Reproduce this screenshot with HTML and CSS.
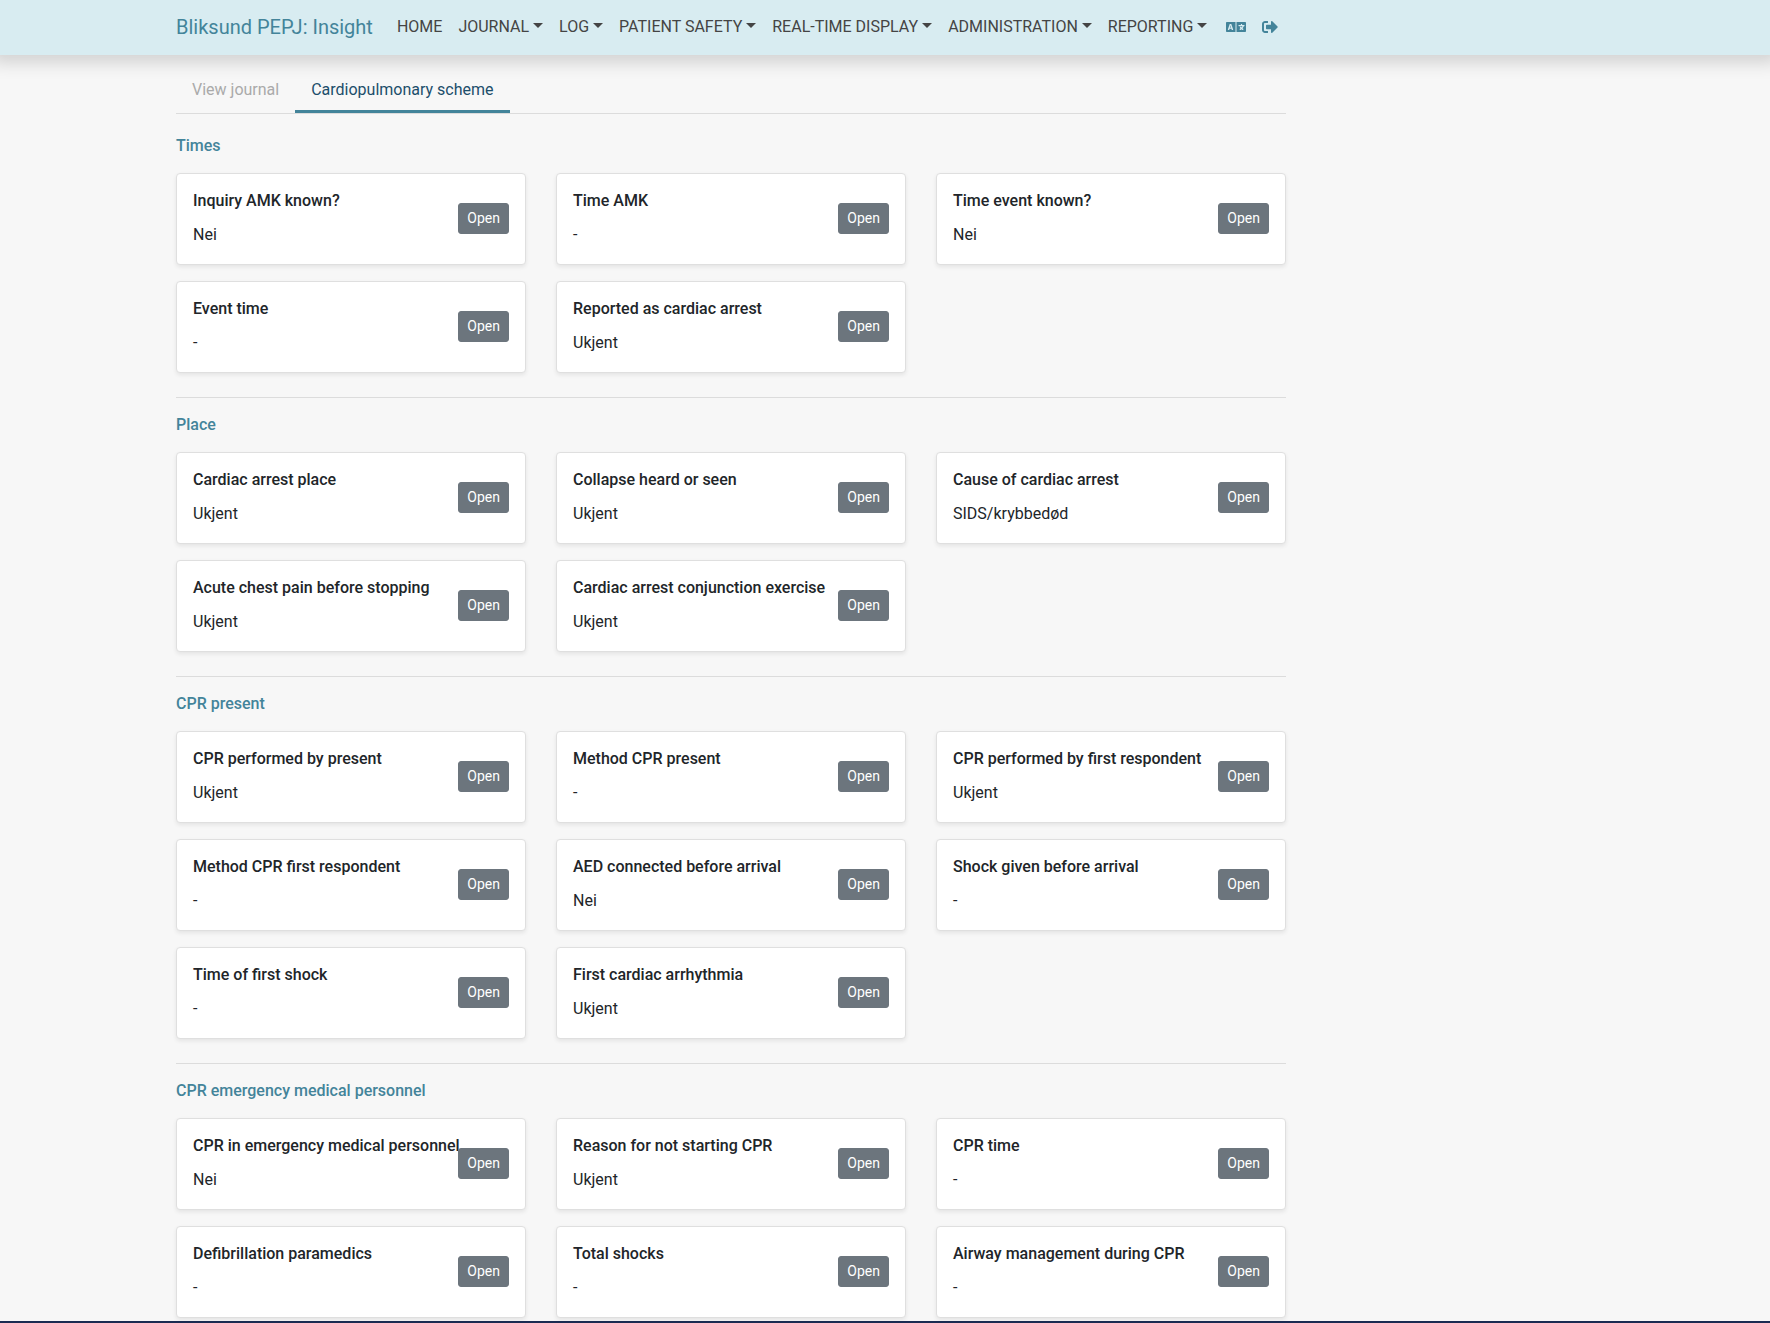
FILE: index.html
```html
<!DOCTYPE html>
<html lang="en">
<head>
<meta charset="utf-8">
<meta name="viewport" content="width=device-width, initial-scale=1">
<title>Bliksund PEPJ: Insight</title>
<link rel="stylesheet" href="styles.css">
</head>
<body>
<header class="topbar">
  <a class="brand" href="#">Bliksund PEPJ: Insight</a>
  <nav class="menu" aria-label="Main">
    <a class="menu-link" href="#">HOME</a>
    <a class="menu-link has-caret" href="#">JOURNAL</a>
    <a class="menu-link has-caret" href="#">LOG</a>
    <a class="menu-link has-caret" href="#">PATIENT SAFETY</a>
    <a class="menu-link has-caret" href="#">REAL-TIME DISPLAY</a>
    <a class="menu-link has-caret" href="#">ADMINISTRATION</a>
    <a class="menu-link has-caret" href="#">REPORTING</a>
  </nav>
  <div class="tools">
    <a class="tool" href="#" aria-label="Language"><svg width="20" height="16" viewBox="0 0 640 512" fill="currentColor"><path d="M152.1 236.2c-3.5-12.1-7.8-33.2-7.8-33.2h-.5s-4.3 21.1-7.8 33.2l-11.1 37.5H163zM616 96H336v320h280c13.3 0 24-10.7 24-24V120c0-13.3-10.7-24-24-24zm-24 120c0 6.6-5.4 12-12 12h-11.4c-6.9 23.6-21.7 47.4-42.7 69.9 8.4 6.4 17.1 12.5 26.1 18 5.5 3.4 7.3 10.5 4.1 16.2l-7.9 13.9c-3.4 5.9-10.9 7.8-16.7 4.3-12.6-7.8-24.5-16.1-35.4-24.9-10.9 8.7-22.7 17.1-35.4 24.9-5.8 3.5-13.3 1.6-16.7-4.3l-7.9-13.9c-3.2-5.6-1.4-12.8 4.2-16.2 9.3-5.7 18-11.7 26.1-18-7.9-8.4-14.9-17-21-25.7-4-5.7-2.2-13.6 3.7-17.1l6.5-3.9 7.3-4.3c5.4-3.2 12.4-1.7 16 3.4 5 7 10.8 14 17.4 20.9 13.5-14.2 23.8-28.9 30-43.2H412c-6.6 0-12-5.4-12-12v-16c0-6.6 5.4-12 12-12h64v-16c0-6.6 5.4-12 12-12h16c6.6 0 12 5.4 12 12v16h64c6.6 0 12 5.4 12 12zM0 120v272c0 13.3 10.7 24 24 24h280V96H24c-13.3 0-24 10.7-24 24zm58.9 216.1L116.4 167c1.7-4.9 6.2-8.1 11.4-8.1h32.5c5.1 0 9.7 3.3 11.4 8.1l57.5 169.1c2.6 7.8-3.1 15.9-11.4 15.9h-22.9a12 12 0 0 1-11.5-8.6l-9.4-31.9h-60.2l-9.1 31.8c-1.5 5.1-6.2 8.7-11.5 8.7H70.3c-8.2 0-14-8.1-11.4-15.9z"/></svg></a>
    <a class="tool" href="#" aria-label="Log out"><svg width="16" height="16" viewBox="0 0 512 512" fill="currentColor"><path d="M497 273L329 441c-15 15-41 4.500-41-17v-96H152c-13.300 0-24-10.700-24-24v-96c0-13.300 10.700-24 24-24h136V88c0-21.400 25.900-32 41-17l168 168c9.300 9.400 9.300 24.600 0 34zM192 436v-40c0-6.600-5.400-12-12-12H96c-17.700 0-32-14.300-32-32V160c0-17.700 14.300-32 32-32h84c6.600 0 12-5.400 12-12V76c0-6.600-5.400-12-12-12H96c-53 0-96 43-96 96v192c0 53 43 96 96 96h84c6.600 0 12-5.400 12-12z"/></svg></a>
  </div>
</header>

<main class="content">
  <nav class="tabs" aria-label="Journal views">
    <a class="tab" href="#">View journal</a>
    <a class="tab tab-active" href="#" aria-current="page">Cardiopulmonary scheme</a>
  </nav>

  <section class="group">
    <h2 class="group-title">Times</h2>
    <div class="cards">
      <article class="card"><div class="card-text"><h3 class="card-title">Inquiry AMK known?</h3><p class="card-value">Nei</p></div><button class="open" type="button">Open</button></article>
      <article class="card"><div class="card-text"><h3 class="card-title">Time AMK</h3><p class="card-value">-</p></div><button class="open" type="button">Open</button></article>
      <article class="card"><div class="card-text"><h3 class="card-title">Time event known?</h3><p class="card-value">Nei</p></div><button class="open" type="button">Open</button></article>
      <article class="card"><div class="card-text"><h3 class="card-title">Event time</h3><p class="card-value">-</p></div><button class="open" type="button">Open</button></article>
      <article class="card"><div class="card-text"><h3 class="card-title">Reported as cardiac arrest</h3><p class="card-value">Ukjent</p></div><button class="open" type="button">Open</button></article>
    </div>
  </section>

  <section class="group">
    <h2 class="group-title">Place</h2>
    <div class="cards">
      <article class="card"><div class="card-text"><h3 class="card-title">Cardiac arrest place</h3><p class="card-value">Ukjent</p></div><button class="open" type="button">Open</button></article>
      <article class="card"><div class="card-text"><h3 class="card-title">Collapse heard or seen</h3><p class="card-value">Ukjent</p></div><button class="open" type="button">Open</button></article>
      <article class="card"><div class="card-text"><h3 class="card-title">Cause of cardiac arrest</h3><p class="card-value">SIDS/krybbedød</p></div><button class="open" type="button">Open</button></article>
      <article class="card"><div class="card-text"><h3 class="card-title">Acute chest pain before stopping</h3><p class="card-value">Ukjent</p></div><button class="open" type="button">Open</button></article>
      <article class="card"><div class="card-text"><h3 class="card-title">Cardiac arrest conjunction exercise</h3><p class="card-value">Ukjent</p></div><button class="open" type="button">Open</button></article>
    </div>
  </section>

  <section class="group">
    <h2 class="group-title">CPR present</h2>
    <div class="cards">
      <article class="card"><div class="card-text"><h3 class="card-title">CPR performed by present</h3><p class="card-value">Ukjent</p></div><button class="open" type="button">Open</button></article>
      <article class="card"><div class="card-text"><h3 class="card-title">Method CPR present</h3><p class="card-value">-</p></div><button class="open" type="button">Open</button></article>
      <article class="card"><div class="card-text"><h3 class="card-title">CPR performed by first respondent</h3><p class="card-value">Ukjent</p></div><button class="open" type="button">Open</button></article>
      <article class="card"><div class="card-text"><h3 class="card-title">Method CPR first respondent</h3><p class="card-value">-</p></div><button class="open" type="button">Open</button></article>
      <article class="card"><div class="card-text"><h3 class="card-title">AED connected before arrival</h3><p class="card-value">Nei</p></div><button class="open" type="button">Open</button></article>
      <article class="card"><div class="card-text"><h3 class="card-title">Shock given before arrival</h3><p class="card-value">-</p></div><button class="open" type="button">Open</button></article>
      <article class="card"><div class="card-text"><h3 class="card-title">Time of first shock</h3><p class="card-value">-</p></div><button class="open" type="button">Open</button></article>
      <article class="card"><div class="card-text"><h3 class="card-title">First cardiac arrhythmia</h3><p class="card-value">Ukjent</p></div><button class="open" type="button">Open</button></article>
    </div>
  </section>

  <section class="group">
    <h2 class="group-title">CPR emergency medical personnel</h2>
    <div class="cards">
      <article class="card"><div class="card-text"><h3 class="card-title">CPR in emergency medical personnel</h3><p class="card-value">Nei</p></div><button class="open" type="button">Open</button></article>
      <article class="card"><div class="card-text"><h3 class="card-title">Reason for not starting CPR</h3><p class="card-value">Ukjent</p></div><button class="open" type="button">Open</button></article>
      <article class="card"><div class="card-text"><h3 class="card-title">CPR time</h3><p class="card-value">-</p></div><button class="open" type="button">Open</button></article>
      <article class="card"><div class="card-text"><h3 class="card-title">Defibrillation paramedics</h3><p class="card-value">-</p></div><button class="open" type="button">Open</button></article>
      <article class="card"><div class="card-text"><h3 class="card-title">Total shocks</h3><p class="card-value">-</p></div><button class="open" type="button">Open</button></article>
      <article class="card"><div class="card-text"><h3 class="card-title">Airway management during CPR</h3><p class="card-value">-</p></div><button class="open" type="button">Open</button></article>
    </div>
  </section>
</main>
<footer class="bottom-line"></footer>
</body>
</html>
```
FILE: styles.css
```css
* { box-sizing: border-box; }

body {
  display: flex;
  flex-direction: column;
  min-height: 100vh;
  margin: 0;
  background: #f7f7f7;
  color: #212529;
  font: 400 16px/24px Roboto, "Liberation Sans", sans-serif;
}

a { color: inherit; text-decoration: none; }
h2, h3, p { margin: 0; }

/* Top bar */
.topbar {
  display: flex;
  align-items: center;
  min-height: 55px;
  padding: 0 16px 2px 176px;
  background: #d8ecf1;
  box-shadow: 0 0 16px 8px rgba(0, 0, 0, 0.15);
}

.brand {
  margin-right: 16px;
  color: #43849a;
  font-size: 20px;
  line-height: 30px;
  white-space: nowrap;
}

.menu, .tools { display: flex; align-items: center; }
.menu-link { padding: 8px; color: #444; white-space: nowrap; }

.has-caret::after {
  content: "";
  display: inline-block;
  margin-left: 4px;
  vertical-align: 4px;
  border: 5px solid transparent;
  border-top-color: currentColor;
  border-bottom: 0;
}

.tools { gap: 16px; margin-left: 11px; color: #43849a; }
.tool { display: flex; }

/* Page content */
.content {
  width: calc(100% - 192px);
  max-width: 1110px;
  margin-left: 176px;
  padding-bottom: 3px;
}

.tabs {
  display: flex;
  margin-bottom: 20px;
  padding-top: 14px;
  border-bottom: 1px solid #dcdcdc;
}

.tab {
  padding: 9px 16px 8px;
  border-bottom: 3px solid transparent;
  color: #aaa;
}

.tab-active { border-color: #43849a; color: #1c4e6b; }

.group + .group {
  margin-top: 24px;
  padding-top: 15px;
  border-top: 1px solid #dcdcdc;
}

.group-title {
  margin-bottom: 15px;
  color: #43849a;
  font-size: 16px;
  font-weight: 500;
}

.cards {
  display: grid;
  grid-template-columns: repeat(3, minmax(0, 1fr));
  gap: 16px 30px;
}

.card {
  display: flex;
  align-items: center;
  justify-content: space-between;
  padding: 15px 16px 17px;
  border: 1px solid #dfdfdf;
  border-radius: 4px;
  background: #fff;
  box-shadow: 0 2px 4px rgba(0, 0, 0, 0.08);
}

.card-text { min-width: 0; }

.card-title {
  margin-bottom: 10px;
  font-size: 16px;
  font-weight: 500;
  white-space: nowrap;
}

.open {
  flex: none;
  padding: 4px 8px;
  border: 1px solid #6c757d;
  border-radius: 3px;
  background: #6c757d;
  color: #fff;
  font: 400 14px/21px Roboto, "Liberation Sans", sans-serif;
}

.bottom-line {
  height: 2px;
  margin-top: auto;
  background: #1a2b52;
}
```
